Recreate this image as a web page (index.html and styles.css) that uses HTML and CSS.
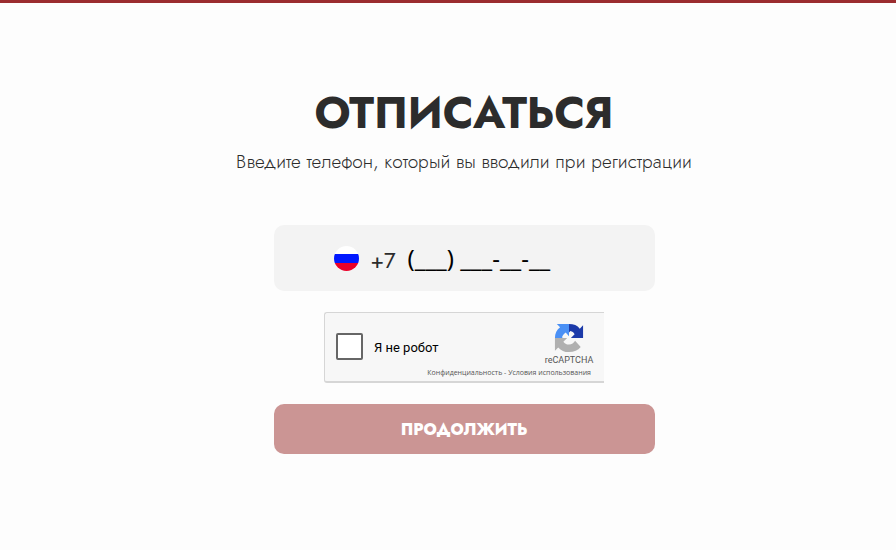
FILE: index.html
```html
<!DOCTYPE html>
<html lang="ru">
<head>
    <meta charset="UTF-8">
    <meta name="viewport" content="width=device-width, initial-scale=1.0">
    <title>Отписаться</title>
    <link rel="stylesheet" href="styles.css">
</head>
<body>

    <main class="page">
        <h1>ОТПИСАТЬСЯ</h1>
        <p class="subtitle" id="phone-hint">Введите телефон, который вы вводили при регистрации</p>

        <form class="form">
            <div class="phone">
                <span class="flag"></span>
                <label class="code" for="phone">+7</label>
                <input type="tel" id="phone" value="(___) ___-__-__" aria-describedby="phone-hint">
            </div>

            <div class="captcha">
                <input type="checkbox" id="robot">
                <label for="robot">Я не робот</label>
                <div class="captcha-logo">
                    <svg width="30" height="30" viewBox="0 0 64 64">
                        <path fill="#1c3aa9" d="M62 32V5l-7 7C50 5 42 2 32 2v18l3-3c4 1 7 3 9 7l-8 8z"/>
                        <path fill="#4a90f5" d="M32 2H6l7 7C6 14 2 22 2 32h18l-3-1c1-4 3-8 8-11l7 8z"/>
                        <path fill="#b0b0b0" d="M2 32v27l7-7c6 7 13 10 23 10 11 0 19-4 25-11L45 38c-3 5-7 8-13 8-6 0-9-2-12-6l8-8z"/>
                    </svg>
                    <span>reCAPTCHA</span>
                </div>
                <div class="captcha-links">
                    <a href="#">Конфиденциальность</a> - <a href="#">Условия использования</a>
                </div>
            </div>

            <button type="submit">ПРОДОЛЖИТЬ</button>
        </form>
    </main>

</body>
</html>
```

FILE: styles.css
```css
* {
    box-sizing: border-box;
}

body {
    margin: 0;
    border-top: 3px solid #9b2c2f;
    font-family: Jost, Lato, "Open Sans", sans-serif;
    background-color: #fdfdfd;
    color: #2c2c2c;
}

.page {
    display: flex;
    flex-direction: column;
    align-items: center;
    padding: 85px 0 60px 32px;
}

h1 {
    margin: 0;
    font-size: 44px;
    line-height: 50px;
    font-weight: 700;
}

.subtitle {
    margin: 11px 0 0;
    font-size: 19px;
    line-height: 26px;
    font-weight: 350;
    text-align: center;
}

.form {
    width: 100%;
    max-width: 381px;
    margin-top: 50px;
}

.phone {
    display: flex;
    align-items: center;
    height: 66px;
    padding: 0 60px;
    background-color: #f3f3f3;
    border-radius: 10px;
}

.flag {
    width: 25px;
    height: 25px;
    border-radius: 50%;
    background: linear-gradient(#fff 33%, #0018ff 33%, #0018ff 66%, #ea0029 66%);
}

.code {
    margin: 4px 12px 0 12px;
    font-size: 22px;
    line-height: 28px;
}

.phone input {
    flex: 1;
    min-width: 0;
    padding: 0;
    border: none;
    outline: none;
    background: none;
    font-family: "Noto Sans", sans-serif;
    font-size: 24px;
    line-height: 28px;
    color: #000;
}

.captcha {
    display: grid;
    grid-template-columns: 28px 1fr 70px;
    grid-template-rows: 51px 14px;
    column-gap: 10px;
    align-items: center;
    width: 280px;
    height: 71px;
    margin: 21px auto;
    padding: 2px 0 2px 11px;
    border: 1px solid #d6d6d6;
    border-right: none;
    border-bottom-width: 2px;
    border-radius: 3px 0 0 3px;
    background-color: #f7f7f7;
    font-family: Roboto, sans-serif;
}

.captcha input {
    appearance: none;
    width: 27px;
    height: 27px;
    margin: 12px 0 0;
    border: 2px solid #666;
    border-radius: 2px;
    background-color: #fff;
}

.captcha label {
    margin-top: 14px;
    font-size: 13px;
    color: #000;
}

.captcha-logo {
    display: flex;
    flex-direction: column;
    align-items: center;
    padding-top: 8px;
    font-size: 9px;
    line-height: 14px;
    color: #555;
}

.captcha-links {
    grid-column: 1 / -1;
    padding-right: 13px;
    text-align: right;
    font-family: "Open Sans", sans-serif;
    font-size: 7px;
    line-height: 10px;
    color: #555;
}

.captcha-links a {
    color: #555;
    text-decoration: none;
}

button {
    width: 100%;
    height: 50px;
    border: none;
    border-radius: 10px;
    background-color: #cb9594;
    color: #fff;
    font-family: inherit;
    font-size: 16px;
    font-weight: 800;
    cursor: pointer;
}
```
